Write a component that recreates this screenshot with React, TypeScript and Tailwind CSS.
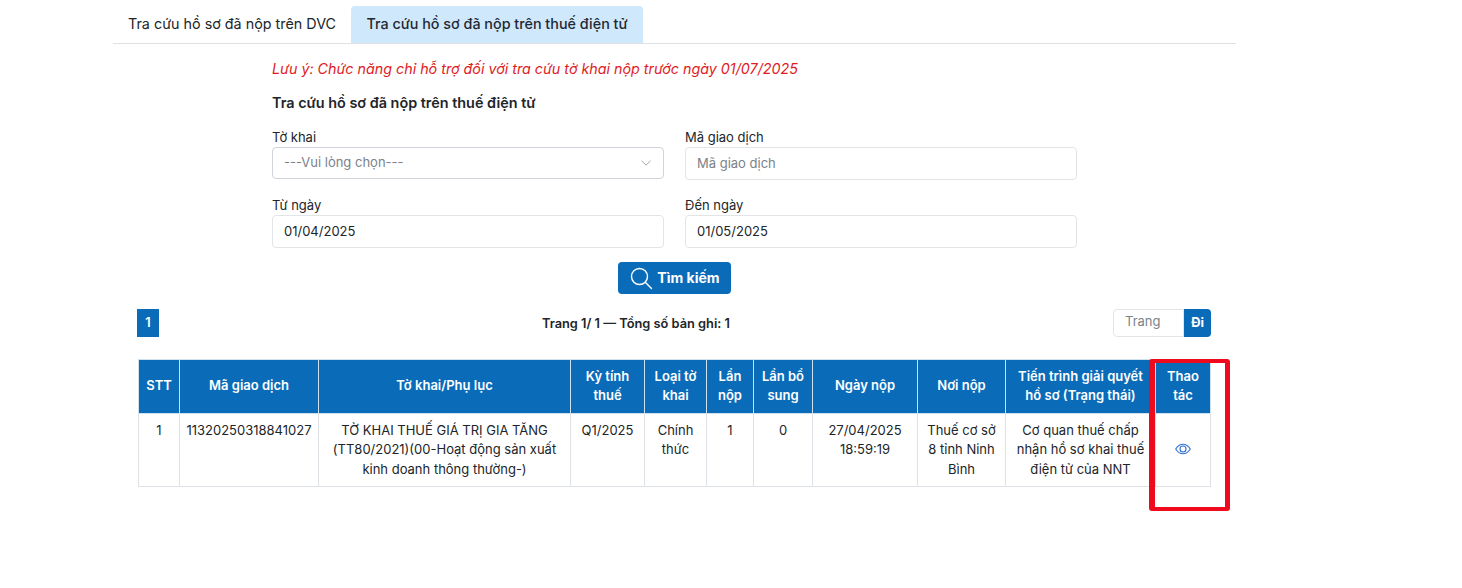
import React from "react";

const headers: [string, number][] = [
  ["STT", 41],
  ["Mã giao dịch", 139],
  ["Tờ khai/Phụ lục", 252],
  ["Kỳ tính thuế", 74],
  ["Loại tờ khai", 62],
  ["Lần nộp", 47],
  ["Lần bổ sung", 59],
  ["Ngày nộp", 105],
  ["Nơi nộp", 88],
  ["Tiến trình giải quyết hồ sơ (Trạng thái)", 150],
  ["Thao tác", 55],
];

const cells = [
  "1",
  "11320250318841027",
  "TỜ KHAI THUẾ GIÁ TRỊ GIA TĂNG (TT80/2021)(00-Hoạt động sản xuất kinh doanh thông thường-)",
  "Q1/2025",
  "Chính thức",
  "1",
  "0",
  "27/04/2025 18:59:19",
  "Thuế cơ sở 8 tỉnh Ninh Bình",
  "Cơ quan thuế chấp nhận hồ sơ khai thuế điện tử của NNT",
];

function Field({ label, value, placeholder, select }: { label: string; value?: string; placeholder?: string; select?: boolean }) {
  return (
    <div className="flex flex-col">
      <label className="h-[20px] text-[13px] leading-[20px] text-[#212529]">{label}</label>
      <div className={`flex items-center justify-between rounded-[4px] border pl-[11px] pr-[11px] text-[13px] ${select ? "h-[32px] border-[#ced4da]" : "h-[33px] border-[#e2e5e8]"} ${value ? "text-[#212529]" : "text-[#7c8288]"}`}>
        <span>{value ?? placeholder}</span>
        {select && (
          <svg width="12" height="12" viewBox="0 0 12 12" fill="none" stroke="#a0a5aa" strokeWidth="1">
            <path d="M1.5 3.8 6 8.2l4.5-4.4" />
          </svg>
        )}
      </div>
    </div>
  );
}

export default function App() {
  return (
    <div className="h-[588px] w-[1462px] overflow-hidden bg-white pl-[113px] pt-[6px] font-['Inter','Noto_Sans',sans-serif] text-[13px] text-[#212529]">
      <div className="flex h-[38px] w-[1123px] border-b border-[#dee2e6] text-[14.35px]">
        <div className="flex h-[37px] w-[238px] items-center pl-[15px] pb-[1px] text-[#212529]">Tra cứu hồ sơ đã nộp trên DVC</div>
        <div className="flex h-[37px] w-[292px] items-center justify-center rounded-t-[4px] bg-[#cfe8fc] pb-[1px] font-medium text-[#1f2933]">Tra cứu hồ sơ đã nộp trên thuế điện tử</div>
      </div>

      <div className="ml-[159px] w-[805px]">
        <p className="mt-[15px] h-[20px] text-[14.3px] italic leading-[20px] text-[#e01b24]">Lưu ý: Chức năng chỉ hỗ trợ đối với tra cứu tờ khai nộp trước ngày 01/07/2025</p>
        <h2 className="mt-[14px] h-[20px] text-[14.4px] font-semibold leading-[20px] text-[#212529]">Tra cứu hồ sơ đã nộp trên thuế điện tử</h2>
        <div className="mt-[14px] grid grid-cols-[392px_392px] gap-x-[21px] gap-y-[15px]">
          <Field label="Tờ khai" placeholder="---Vui lòng chọn---" select />
          <Field label="Mã giao dịch" placeholder="Mã giao dịch" />
          <Field label="Từ ngày" value="01/04/2025" />
          <Field label="Đến ngày" value="01/05/2025" />
        </div>
        <div className="mt-[14px] flex justify-center">
          <button className="flex h-[32px] w-[113px] items-center justify-center gap-[4px] rounded-[4px] bg-[#0a6cb9] pb-[1px] text-[14px] font-bold text-white">
            <svg width="24" height="24" viewBox="0 0 24 24" fill="none" stroke="white" strokeWidth="1.4" strokeLinecap="round">
              <circle cx="10.5" cy="10.5" r="8" />
              <path d="m16.5 16.5 6 6" />
            </svg>
            Tìm kiếm
          </button>
        </div>
      </div>

      <div className="ml-[24px] mt-[15px] flex h-[29px] w-[1074px] items-start justify-between">
        <div className="flex h-[28px] w-[22px] items-center justify-center bg-[#0a6cb9] pb-[1px] text-[12.8px] font-semibold text-white">1</div>
        <div className="h-[29px] text-[12.8px] font-semibold leading-[29px] text-[#212529]">Trang 1/ 1 — Tổng số bản ghi: 1</div>
        <div className="flex h-[28px] w-[98px]">
          <div className="flex flex-1 items-center rounded-l-[4px] border border-[#e2e5e8] pl-[11px] pb-[2px] text-[13px] text-[#7c8288]">Trang</div>
          <div className="flex w-[27px] items-center justify-center rounded-r-[4px] bg-[#0a6cb9] pb-[1px] text-[12.8px] font-bold text-white">Đi</div>
        </div>
      </div>

      <div className="relative ml-[25px] mt-[21px] w-[1073px]">
        <table className="w-[1073px] table-fixed border-collapse">
          <colgroup>
            {headers.map(([h, w]) => (
              <col key={h} style={{ width: w }} />
            ))}
          </colgroup>
          <thead>
            <tr className="h-[54px] bg-[#0a6cb9]">
              {headers.map(([h]) => (
                <th key={h} className="border border-[#cfe0ee] px-[6px] pb-[2px] text-center text-[13px] font-semibold leading-[19px] text-white">{h}</th>
              ))}
            </tr>
          </thead>
          <tbody>
            <tr className="h-[73px]">
              {cells.map((c, i) => (
                <td key={i} className="border border-[#dee2e6] px-[6px] pt-[6.6px] pb-[6px] text-center align-top text-[13px] leading-[19.5px] text-[#212529]">{c}</td>
              ))}
              <td className="border border-[#dee2e6] pb-[2px] text-center align-middle">
                <svg className="mx-auto" width="16" height="12" viewBox="0 0 16 12" fill="none" stroke="#2f6fd0" strokeWidth="1.1">
                  <path d="M.7 6C2.6 2.9 5 1.2 8 1.2S13.4 2.9 15.3 6C13.4 9.1 11 10.8 8 10.8S2.6 9.1.7 6Z" />
                  <circle cx="8" cy="6" r="3" />
                </svg>
              </td>
            </tr>
          </tbody>
        </table>
        <div className="absolute left-[1011px] top-[0px] h-[152px] w-[81px] rounded-[3px] border-y-[4px] border-r-[5px] border-l-[6px] border-[#f00a1e]" />
      </div>
    </div>
  );
}
